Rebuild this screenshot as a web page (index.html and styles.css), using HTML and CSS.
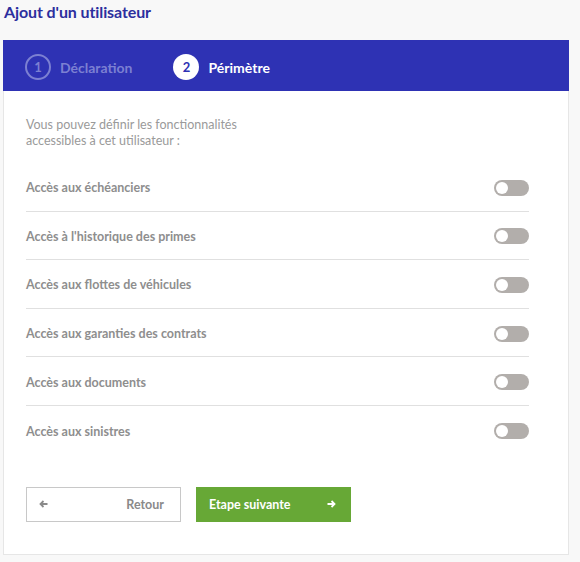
FILE: index.html
```html
<!DOCTYPE html>
<html lang="fr">
<head>
<meta charset="utf-8">
<link rel="stylesheet" href="styles.css">
</head>
<body>
<h1 class="title">Ajout d'un utilisateur</h1>
<div class="card">
  <div class="steps">
    <div class="step step-done"><span class="num">1</span><span class="label">Déclaration</span></div>
    <div class="step step-active"><span class="num">2</span><span class="label">Périmètre</span></div>
  </div>
  <div class="body">
    <p class="intro">Vous pouvez définir les fonctionnalités<br>accessibles à cet utilisateur :</p>
    <ul class="list">
      <li class="row"><span>Accès aux échéanciers</span><span class="toggle"></span></li>
      <li class="row"><span>Accès à l'historique des primes</span><span class="toggle"></span></li>
      <li class="row"><span>Accès aux flottes de véhicules</span><span class="toggle"></span></li>
      <li class="row"><span>Accès aux garanties des contrats</span><span class="toggle"></span></li>
      <li class="row"><span>Accès aux documents</span><span class="toggle"></span></li>
      <li class="row"><span>Accès aux sinistres</span><span class="toggle"></span></li>
    </ul>
    <div class="actions">
      <button class="btn btn-back">
        <svg class="arrow" width="9" height="8" viewBox="0 0 9 8"><path d="M8.5 4H1.5M4.5 1L1.5 4L4.5 7" fill="none" stroke="currentColor" stroke-width="1.8"/></svg>
        <span>Retour</span>
      </button>
      <button class="btn btn-next">
        <span>Etape suivante</span>
        <svg class="arrow" width="9" height="8" viewBox="0 0 9 8"><path d="M0.5 4H7.5M4.5 1L7.5 4L4.5 7" fill="none" stroke="currentColor" stroke-width="1.8"/></svg>
      </button>
    </div>
  </div>
</div>
</body>
</html>
```
FILE: styles.css
```css
* { box-sizing: border-box; }
html, body { margin: 0; padding: 0; }
body {
  background: #f8f8f8;
  font-family: "Lato", "Noto Sans", sans-serif;
  width: 580px;
  height: 562px;
  padding: 0 11px 0 3px;
}
.title {
  margin: 0;
  padding: 2px 0 0 1px;
  height: 40px;
  font-size: 16px;
  font-weight: 700;
  color: #2c2f9e;
  letter-spacing: -0.1px;
}
.card {
  background: #fff;
  border: 1px solid #e6e6e6;
  height: 515px;
}
.steps {
  background: #2e32b4;
  height: 51px;
  margin: -1px -1px 0;
  display: flex;
  align-items: center;
  padding: 3px 0 0 22px;
  gap: 41px;
}
.step { display: flex; align-items: center; gap: 9px; font-size: 14px; font-weight: 700; }
.num {
  width: 26px; height: 26px; border-radius: 50%;
  display: flex; align-items: center; justify-content: center;
  font-size: 13px;
}
.step-done .num { border: 2px solid #7c80d2; color: #7c80d2; }
.step-done .label { color: #7c80d2; }
.step-active .num { background: #fff; color: #2e32b4; }
.step-active .label { color: #fff; }
.body { padding: 26px 39px 0 22px; }
.intro {
  margin: 0 0 14px;
  font-size: 12.5px;
  line-height: 16px;
  color: #9a9a9a;
}
.list { list-style: none; margin: 0; padding: 0; }
.row {
  display: flex; align-items: center; justify-content: space-between;
  height: 48.6px;
  border-bottom: 1px solid #e0e0e0;
  font-size: 12.5px;
  font-weight: 700;
  color: #8e8e8e;
  padding-top: 2px;
}
.row:last-child { border-bottom: none; }
.toggle {
  width: 35px; height: 16px; border-radius: 8px;
  background: #b2aeab;
  position: relative;
}
.toggle::after {
  content: ""; position: absolute; left: 2px; top: 2px;
  width: 12px; height: 12px; border-radius: 50%; background: #fff;
}
.actions { display: flex; gap: 15px; margin-top: 32px; }
.btn {
  width: 155px; height: 35px;
  display: flex; align-items: center; justify-content: space-between;
  font-family: inherit; font-size: 12.5px; font-weight: 700;
  padding: 0 14px 0 12px;
  cursor: pointer;
}
.btn-back { background: #fff; border: 1px solid #c8c8c8; color: #8a8a8a; padding-right: 16px; }
.btn-next { background: #67a836; border: 1px solid #67a836; color: #fff; }
```
